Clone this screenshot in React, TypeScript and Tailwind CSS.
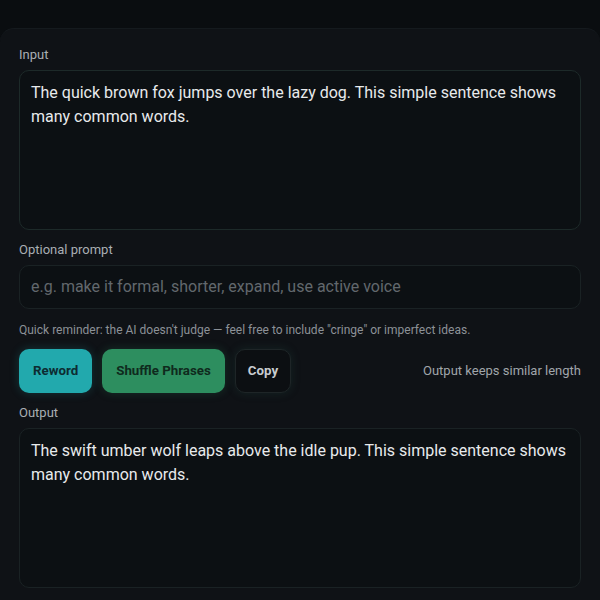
import React from 'react'

const font = { fontFamily: 'Roboto, "Liberation Sans", sans-serif' }

function App() {
  return (
    <div className="min-h-[600px] bg-[#0a0d10] pt-[28px]" style={font}>
      <div className="rounded-t-[14px] bg-[#0f1216] border-t border-[#151a1e] px-[19px] pt-[16px] pb-[20px] min-h-[572px]">
        {/* Input */}
        <div className="text-[13px] text-[#a9aeb3] leading-[20px]">Input</div>
        <div className="mt-[5px] h-[160px] rounded-[10px] border border-[#1d2a29] bg-[#0c1013] px-[11px] py-[10px] text-[16px] leading-[24px] text-[#e8eaec]">
          The quick brown fox jumps over the lazy dog. This simple sentence shows many common words.
        </div>

        {/* Optional prompt */}
        <div className="mt-[10px] text-[13px] text-[#a9aeb3] leading-[20px]">Optional prompt</div>
        <div className="mt-[5px] h-[44px] rounded-[10px] border border-[#1a2224] bg-[#0c1013] px-[11px] flex items-center text-[16px] text-[#62686d]">
          e.g. make it formal, shorter, expand, use active voice
        </div>

        <div className="mt-[12px] text-[12px] leading-[18px] text-[#8c9197]">
          Quick reminder: the AI doesn't judge — feel free to include "cringe" or imperfect ideas.
        </div>

        {/* Actions */}
        <div className="mt-[10px] flex items-center gap-[10px]">
          <button className="h-[44px] px-[14px] rounded-[10px] bg-[#22a9ad] text-[13.3px] font-bold text-[#0d2c32] shadow-[0_0_10px_rgba(34,169,173,0.25)]">
            Reword
          </button>
          <button className="h-[44px] px-[14px] rounded-[10px] bg-[#2d8e5f] text-[13.3px] font-bold text-[#0f2a1d] shadow-[0_0_10px_rgba(45,142,95,0.25)]">
            Shuffle Phrases
          </button>
          <button className="h-[44px] px-[12px] rounded-[10px] bg-[#0c0f12] border border-[#1e2527] text-[13.3px] font-bold text-[#c8ccd0] shadow-[0_0_10px_rgba(40,90,80,0.25)]">
            Copy
          </button>
          <div className="ml-auto text-[13px] text-[#a0a5aa]">Output keeps similar length</div>
        </div>

        {/* Output */}
        <div className="mt-[10px] text-[13px] text-[#a9aeb3] leading-[20px]">Output</div>
        <div className="mt-[5px] h-[160px] rounded-[10px] border border-[#1a2224] bg-[#0c1013] px-[11px] py-[10px] text-[16px] leading-[24px] text-[#e8eaec]">
          The swift umber wolf leaps above the idle pup. This simple sentence shows many common words.
        </div>
      </div>
    </div>
  )
}

export default App
